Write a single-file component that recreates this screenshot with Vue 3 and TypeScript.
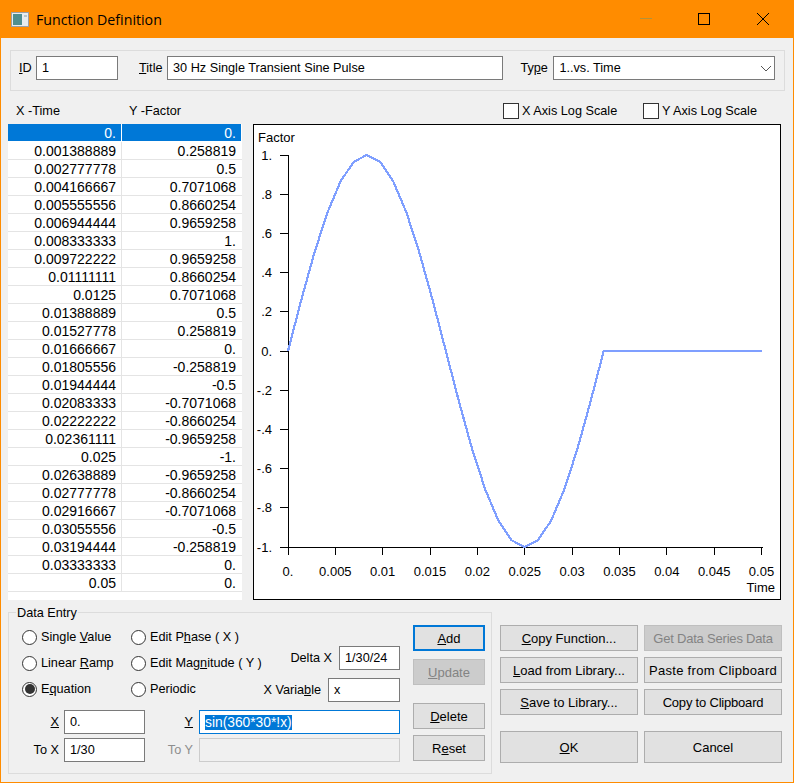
<script setup lang="ts">
import { computed } from 'vue'

// table values as the dialog prints them
const rows: [string, string][] = [
  ['0.', '0.'],
  ['0.001388889', '0.258819'],
  ['0.002777778', '0.5'],
  ['0.004166667', '0.7071068'],
  ['0.005555556', '0.8660254'],
  ['0.006944444', '0.9659258'],
  ['0.008333333', '1.'],
  ['0.009722222', '0.9659258'],
  ['0.01111111', '0.8660254'],
  ['0.0125', '0.7071068'],
  ['0.01388889', '0.5'],
  ['0.01527778', '0.258819'],
  ['0.01666667', '0.'],
  ['0.01805556', '-0.258819'],
  ['0.01944444', '-0.5'],
  ['0.02083333', '-0.7071068'],
  ['0.02222222', '-0.8660254'],
  ['0.02361111', '-0.9659258'],
  ['0.025', '-1.'],
  ['0.02638889', '-0.9659258'],
  ['0.02777778', '-0.8660254'],
  ['0.02916667', '-0.7071068'],
  ['0.03055556', '-0.5'],
  ['0.03194444', '-0.258819'],
  ['0.03333333', '0.'],
  ['0.05', '0.'],
]

// plot geometry, inside the framed box
const x0 = 34
const xSpan = 473.5
const yMid = 226
const yHalf = 196

const sx = (v: number) => x0 + (v / 0.05) * xSpan
const sy = (v: number) => yMid - v * yHalf

const curve = computed(() =>
  rows.map(([x, y]) => `${sx(parseFloat(x)).toFixed(1)},${sy(parseFloat(y)).toFixed(1)}`).join(' '),
)

const xTicks = ['0.', '0.005', '0.01', '0.015', '0.02', '0.025', '0.03', '0.035', '0.04', '0.045', '0.05']
const yTicks = ['1.', '.8', '.6', '.4', '.2', '0.', '-.2', '-.4', '-.6', '-.8', '-1.']
</script>

<template>
  <div class="window">
    <header class="titlebar">
      <svg class="appicon" width="18" height="15" viewBox="0 0 18 15">
        <rect x="0.5" y="0.5" width="17" height="14" fill="#e8ecee" stroke="#9a9fa6" />
        <rect x="2" y="2" width="9" height="11" fill="#4f8f8f" />
        <rect x="13" y="3" width="3" height="2" fill="#b9c4c8" />
      </svg>
      <span class="caption">Function Definition</span>
      <div class="winbtns">
        <svg width="14" height="14" viewBox="0 0 14 14"><path d="M1 6.5h12" stroke="#b3923a" fill="none" /></svg>
        <svg class="maxbtn" width="14" height="14" viewBox="0 0 14 14"><rect x="1.5" y="1.5" width="11" height="11" stroke="#000" fill="none" /></svg>
        <svg width="14" height="14" viewBox="0 0 14 14"><path d="M1 1l12 12M13 1L1 13" stroke="#000" fill="none" /></svg>
      </div>
    </header>

    <main class="body">
      <section class="idbar">
        <label class="lbl-id"><u>I</u>D</label>
        <input class="field f-id" value="1" readonly />
        <label class="lbl-title"><u>T</u>itle</label>
        <input class="field f-title" value="30 Hz Single Transient Sine Pulse" readonly />
        <label class="lbl-type">Ty<u>p</u>e</label>
        <div class="field f-type">
          <span>1..vs. Time</span>
          <svg width="12" height="7" viewBox="0 0 12 7"><path d="M1 1l5 5 5-5" stroke="#555" fill="none" /></svg>
        </div>
      </section>

      <div class="heads">
        <span class="head-x">X -Time</span>
        <span class="head-y">Y -Factor</span>
        <span class="check c-x"><i class="box"></i><span>X Axis Log Scale</span></span>
        <span class="check c-y"><i class="box"></i><span>Y Axis Log Scale</span></span>
      </div>

      <div class="middle">
        <div class="grid">
          <div v-for="(r, i) in rows" :key="i" class="row" :class="{ sel: i === 0 }">
            <div class="cell c1">{{ r[0] }}</div>
            <div class="cell c2">{{ r[1] }}</div>
          </div>
        </div>

        <div class="plot">
          <svg width="526" height="474" viewBox="0 0 526 474">
            <g class="axes">
              <path :d="`M${x0} ${sy(1)}V${sy(-1) + 0.5}H${sx(0.05) + 1}`" />
              <path v-for="(t, i) in yTicks" :key="t" :d="`M${x0 - 8} ${30 + i * 39.2}H${x0}`" />
              <path v-for="(t, i) in xTicks" :key="t" :d="`M${x0 + i * 47.35} ${sy(-1)}v8`" />
            </g>
            <polyline class="curve" :points="curve" />
            <text class="lab" x="4" y="17">Factor</text>
            <text v-for="(t, i) in yTicks" :key="t" class="lab" text-anchor="end" x="18" :y="34.5 + i * 39.2">{{ t }}</text>
            <text v-for="(t, i) in xTicks" :key="t" class="lab" text-anchor="middle" :x="x0 + i * 47.35" y="451">{{ t }}</text>
            <text class="lab" text-anchor="end" x="521" y="467">Time</text>
          </svg>
        </div>
      </div>

      <div class="bottom">
        <fieldset class="entry">
          <legend>Data Entry</legend>
          <div class="entry-left">
            <div class="opts">
              <div class="radios">
                <span class="radio"><i class="dot"></i><span>Single <u>V</u>alue</span></span>
                <span class="radio"><i class="dot"></i><span>Edit P<u>h</u>ase ( X )</span></span>
                <span class="radio"><i class="dot"></i><span>Linear <u>R</u>amp</span></span>
                <span class="radio"><i class="dot"></i><span>Edit Mag<u>n</u>itude ( Y )</span></span>
                <span class="radio"><i class="dot on"></i><span>E<u>q</u>uation</span></span>
                <span class="radio"><i class="dot"></i><span>Periodic</span></span>
              </div>
              <div class="vars">
                <div class="var"><label>Delta X</label><input class="field f-delta" value="1/30/24" readonly /></div>
                <div class="var"><label>X Varia<u>b</u>le</label><input class="field f-var" value="x" readonly /></div>
              </div>
            </div>
            <div class="xy">
              <label><u>X</u></label>
              <input class="field" value="0." readonly />
              <label><u>Y</u></label>
              <div class="field f-y"><span class="selected">sin(360*30*!x)</span></div>
              <label>To X</label>
              <input class="field" value="1/30" readonly />
              <label class="off">To Y</label>
              <div class="field off-field"></div>
            </div>
          </div>
          <div class="entry-btns">
            <button class="btn default"><u>A</u>dd</button>
            <button class="btn off"><u>U</u>pdate</button>
            <button class="btn gap-top"><u>D</u>elete</button>
            <button class="btn">R<u>e</u>set</button>
          </div>
        </fieldset>

        <div class="actions">
          <button class="btn"><u>C</u>opy Function...</button>
          <button class="btn off tight">Get Data Series Data</button>
          <button class="btn"><u>L</u>oad from Library...</button>
          <button class="btn loose">Paste from Clipboard</button>
          <button class="btn"><u>S</u>ave to Library...</button>
          <button class="btn tight">Copy to Clipboard</button>
          <button class="btn big"><u>O</u>K</button>
          <button class="btn big">Cancel</button>
        </div>
      </div>
    </main>
  </div>
</template>

<style>
html,
body {
  margin: 0;
  background: #f0f0f0;
}
</style>

<style scoped>
.window {
  width: 794px;
  height: 783px;
  box-sizing: border-box;
  background: #f0f0f0;
  border: 1px solid #ff8c00;
  border-top: none;
  font: 12.7px "Liberation Sans", Arial, sans-serif;
  color: #000;
  display: flex;
  flex-direction: column;
}
.titlebar {
  height: 38px;
  flex: none;
  margin: 0 -1px;
  background: #ff8c00;
  display: flex;
  align-items: center;
  padding-left: 11px;
}
.appicon {
  margin-right: 7px;
}
.caption {
  font: 14.2px "Open Sans", sans-serif;
  color: #000;
}
.winbtns {
  margin-left: auto;
  display: flex;
  gap: 44px;
  padding-right: 24px;
}
.maxbtn {
  margin-right: 1px;
}
.body {
  flex: 1;
  padding: 12px 11px 8px 7px;
  display: flex;
  flex-direction: column;
}

/* top strip */
.idbar {
  margin: 0 -3px 0 2px;
  height: 41px;
  box-sizing: border-box;
  border: 1px solid #dcdcdc;
  display: flex;
  align-items: flex-start;
  padding: 5px 9px 0 8px;
}
.idbar label {
  flex: none;
  line-height: 24px;
}
.lbl-id {
  width: 14px;
}
.lbl-title {
  width: 25px;
}
.lbl-type {
  width: 30px;
}
.field {
  box-sizing: border-box;
  height: 24px;
  border: 1px solid #7a7a7a;
  background: #fff;
  padding: 0 5px;
  margin: 0;
  font: inherit;
  color: #000;
  outline: none;
  display: flex;
  align-items: center;
}
.f-id {
  width: 82px;
  margin: 0 21px 0 3px;
}
.f-title {
  width: 337px;
  margin: 0 17px 0 3px;
}
.f-type {
  width: 222px;
  margin-left: 3px;
  justify-content: space-between;
  padding-right: 2px;
}

/* column heads + log checks */
.heads {
  height: 33px;
  box-sizing: border-box;
  padding-top: 6px;
  display: flex;
  align-items: center;
}
.head-x {
  margin-left: 8px;
  width: 113px;
}
.head-y {
  width: 374px;
}
.check {
  display: flex;
  align-items: center;
  gap: 3px;
}
.c-x {
  width: 140px;
}
.box {
  width: 16px;
  height: 16px;
  box-sizing: border-box;
  border: 1px solid #333;
  background: #fff;
  display: block;
}

/* table + plot */
.middle {
  display: flex;
  gap: 11px;
}
.grid {
  width: 234px;
  height: 476px;
  background: #fff;
  flex: none;
  font-size: 14px;
}
.row {
  height: 18px;
  box-sizing: border-box;
  display: flex;
  border-bottom: 1px solid #e4e4e4;
}
.cell {
  box-sizing: border-box;
  text-align: right;
  line-height: 19px;
  padding-right: 5px;
  height: 17px;
}
.c1 {
  width: 114px;
  border-right: 1px solid #e4e4e4;
}
.c2 {
  width: 119px;
}
.sel {
  border-bottom-color: #fff;
}
.sel .cell {
  background: #0078d7;
  color: #fff;
  border-right-color: #fff;
}
.plot {
  width: 528px;
  height: 476px;
  box-sizing: border-box;
  border: 1px solid #000;
  background: #fff;
}
.plot svg {
  display: block;
}
.axes path {
  stroke: #000;
  stroke-width: 1;
  fill: none;
  shape-rendering: crispEdges;
}
.curve {
  fill: none;
  stroke: #7f9fff;
  stroke-width: 2.2;
  shape-rendering: crispEdges;
}
.lab {
  font: 13px "Liberation Sans", Arial, sans-serif;
  fill: #000;
}

/* lower half */
.bottom {
  display: flex;
  gap: 8px;
  margin-top: 6px;
  align-items: flex-start;
}
.entry {
  width: 484px;
  height: 162px;
  box-sizing: border-box;
  margin: 6px 0 0;
  padding: 0;
  border: 1px solid #dcdcdc;
  position: relative;
  display: flex;
  flex: none;
}
legend {
  position: absolute;
  top: -7px;
  left: 7px;
  padding: 0 1px;
  background: #f0f0f0;
  line-height: 14px;
}
.entry-left {
  width: 391px;
  padding: 11px 0 0 13px;
  box-sizing: border-box;
  flex: none;
}
.opts {
  display: flex;
  height: 86px;
}
.radios {
  display: grid;
  grid-template-columns: 109px auto;
  grid-auto-rows: 26px;
  align-items: center;
  width: 240px;
  flex: none;
}
.radio {
  display: flex;
  align-items: center;
  gap: 4px;
  white-space: nowrap;
}
.dot {
  width: 15px;
  height: 15px;
  box-sizing: border-box;
  border: 1px solid #333;
  border-radius: 50%;
  background: #fff;
  display: block;
  position: relative;
}
.dot.on::after {
  content: '';
  position: absolute;
  inset: 1.5px;
  border-radius: 50%;
  background: #333;
}
.vars {
  flex: 1;
  padding-top: 22px;
  display: flex;
  flex-direction: column;
  gap: 8px;
  align-items: flex-end;
}
.var {
  display: flex;
  align-items: center;
  gap: 7px;
  white-space: nowrap;
}
.f-delta {
  width: 61px;
}
.f-var {
  width: 72px;
}
.xy {
  display: grid;
  grid-template-columns: 37px 81px 44px 201px;
  grid-auto-rows: 24px;
  column-gap: 5px;
  row-gap: 4px;
  align-items: center;
}
.xy label {
  text-align: right;
}
.xy label:nth-child(3),
.xy label:nth-child(7) {
  padding-right: 1px;
}
.xy input {
  width: 100%;
}
.off {
  color: #8d8d8d;
}
.f-y {
  border-color: #0078d7;
  padding-left: 5px;
  font-size: 13.8px;
}
.selected {
  background: #0078d7;
  color: #fff;
}
.off-field {
  background: #f0f0f0;
  border-color: #cccccc;
}
.entry-btns {
  width: 72px;
  margin: 12px 0 0 13px;
  display: flex;
  flex-direction: column;
  gap: 8px;
}
.btn {
  height: 26px;
  box-sizing: border-box;
  border: 1px solid #adadad;
  background: #e1e1e1;
  font: 13px "Liberation Sans", Arial, sans-serif;
  color: #000;
  padding: 0;
}
.btn.off {
  background: #cccccc;
  border-color: #bfbfbf;
  color: #838383;
}
.btn.default {
  border: 2px solid #0078d7;
}
.btn.tight {
  letter-spacing: -0.2px;
}
.btn.loose {
  letter-spacing: 0.3px;
}
.gap-top {
  margin-top: 10px;
}
.entry-btns .btn:last-child {
  margin-top: -2px;
}
.actions {
  margin-top: 19px;
  display: grid;
  grid-template-columns: 138px 138px;
  column-gap: 6px;
  row-gap: 6px;
}
.btn.big {
  height: 32px;
  margin-top: 10px;
}
</style>
